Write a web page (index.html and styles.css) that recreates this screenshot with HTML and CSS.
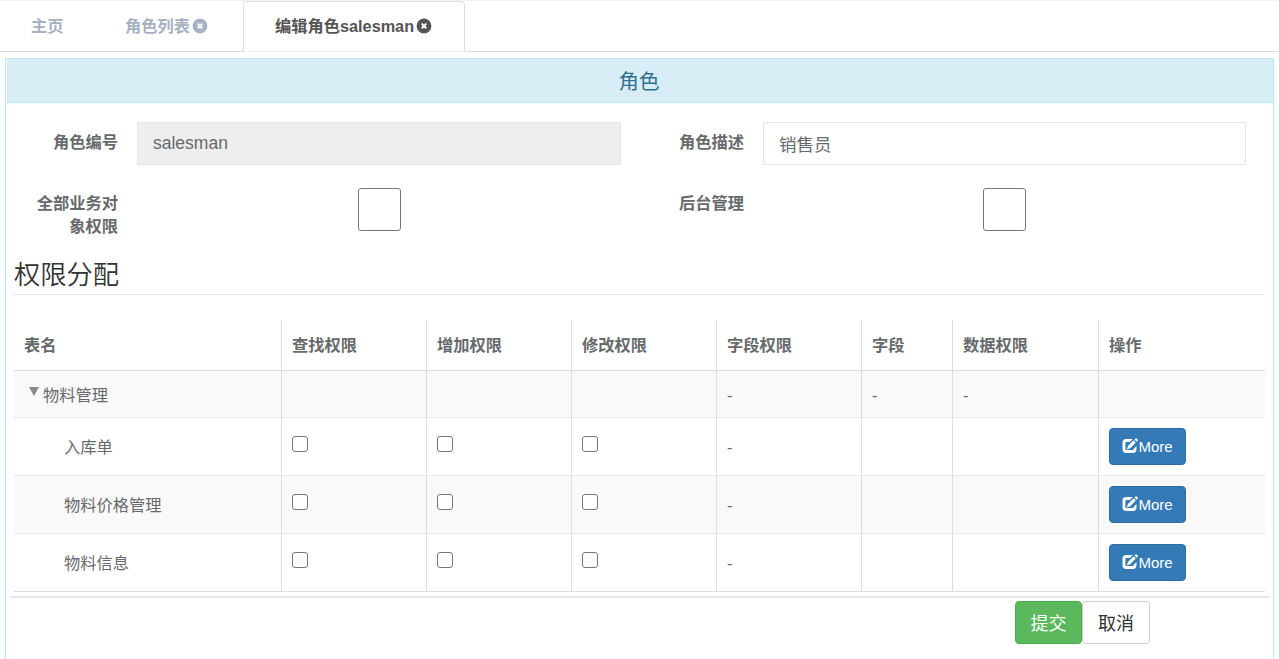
FILE: index.html
```html
<!DOCTYPE html>
<html lang="zh-CN">
<head>
    <meta charset="UTF-8">
    <meta name="viewport" content="width=device-width, initial-scale=1.0">
    <title>编辑角色</title>
    <link rel="stylesheet" href="styles.css">
</head>
<body>
    <svg class="icon-defs">
        <symbol id="icon-close" viewBox="0 0 16 16">
            <path fill-rule="evenodd" d="M8 .6a7.400 7.400 0 1 0 0 14.800A7.400 7.400 0 0 0 8 .6zM5 6.300l1.300-1.300L8 6.600l1.700-1.600 1.300 1.300L9.400 8l1.600 1.700-1.300 1.300L8 9.400l-1.700 1.600-1.300-1.300L6.600 8z"/>
        </symbol>
        <symbol id="icon-edit" viewBox="0 0 16 16">
            <path d="M10.600 1H4.200A3.700 3.700 0 0 0 .5 4.700v6.600A3.700 3.700 0 0 0 4.200 15h6.600a3.700 3.700 0 0 0 3.700-3.700V8l-2.800 2.700v.3a1.100 1.100 0 0 1-1.100 1.100H4.500a1.100 1.100 0 0 1-1.100-1.100v-6a1.100 1.100 0 0 1 1.100-1.100h3.400z"/>
            <path d="M11.600 2.300l2.200 2.200-5.600 5.700-3.500 1.200 1.300-3.500zM12.500 1.500l1-1a.8.8 0 0 1 1.100 0l1.100 1.100a.8.8 0 0 1 0 1.100l-1 1z"/>
        </symbol>
    </svg>

    <ul class="tabs">
        <li class="tab tab-home"><a>主页</a></li>
        <li class="tab tab-list"><a>角色列表</a><svg class="icon-close"><use href="#icon-close"/></svg></li>
        <li class="tab tab-edit active"><a>编辑角色salesman</a><svg class="icon-close"><use href="#icon-close"/></svg></li>
    </ul>

    <div class="panel">
        <div class="panel-heading">角色</div>
        <div class="panel-body">
            <form class="role-form">
                <label>角色编号</label>
                <input type="text" class="form-control" value="salesman" disabled>
                <label>角色描述</label>
                <input type="text" class="form-control" value="销售员">
                <label>全部业务对象权限</label>
                <div class="check-field"><input type="checkbox" class="check check-lg"></div>
                <label>后台管理</label>
                <div class="check-field"><input type="checkbox" class="check check-lg"></div>
            </form>

            <h3 class="legend">权限分配</h3>

            <table class="table">
                <colgroup>
                    <col class="col-name">
                    <col class="col-auth">
                    <col class="col-auth">
                    <col class="col-auth">
                    <col class="col-auth">
                    <col class="col-field">
                    <col class="col-data">
                    <col class="col-action">
                </colgroup>
                <thead>
                    <tr>
                        <th>表名</th>
                        <th>查找权限</th>
                        <th>增加权限</th>
                        <th>修改权限</th>
                        <th>字段权限</th>
                        <th>字段</th>
                        <th>数据权限</th>
                        <th>操作</th>
                    </tr>
                </thead>
                <tbody>
                    <tr class="parent">
                        <td><span class="expander"></span>物料管理</td>
                        <td></td>
                        <td></td>
                        <td></td>
                        <td>-</td>
                        <td>-</td>
                        <td>-</td>
                        <td></td>
                    </tr>
                    <tr>
                        <td class="child">入库单</td>
                        <td><input type="checkbox" class="check"></td>
                        <td><input type="checkbox" class="check"></td>
                        <td><input type="checkbox" class="check"></td>
                        <td>-</td>
                        <td></td>
                        <td></td>
                        <td><button class="btn btn-primary"><svg class="icon-edit"><use href="#icon-edit"/></svg>More</button></td>
                    </tr>
                    <tr>
                        <td class="child">物料价格管理</td>
                        <td><input type="checkbox" class="check"></td>
                        <td><input type="checkbox" class="check"></td>
                        <td><input type="checkbox" class="check"></td>
                        <td>-</td>
                        <td></td>
                        <td></td>
                        <td><button class="btn btn-primary"><svg class="icon-edit"><use href="#icon-edit"/></svg>More</button></td>
                    </tr>
                    <tr>
                        <td class="child">物料信息</td>
                        <td><input type="checkbox" class="check"></td>
                        <td><input type="checkbox" class="check"></td>
                        <td><input type="checkbox" class="check"></td>
                        <td>-</td>
                        <td></td>
                        <td></td>
                        <td><button class="btn btn-primary"><svg class="icon-edit"><use href="#icon-edit"/></svg>More</button></td>
                    </tr>
                </tbody>
            </table>
        </div>
        <div class="panel-footer">
            <button class="btn btn-success">提交</button>
            <button class="btn btn-default">取消</button>
        </div>
    </div>
</body>
</html>
```
FILE: styles.css
```css
* {
    margin: 0;
    padding: 0;
    box-sizing: border-box;
}

body {
    height: 659px;
    overflow: hidden;
    display: flex;
    flex-direction: column;
    font-family: "Liberation Sans", "Noto Sans CJK SC", sans-serif;
    font-size: 16.25px;
    line-height: 23px;
    color: #676a6c;
    background-color: #fff;
}

.icon-defs {
    display: none;
}

/* Tabs */
.tabs {
    display: flex;
    flex: none;
    height: 52px;
    list-style: none;
    border-top: 1px solid #f3f3f4;
    border-bottom: 1px solid #ddd;
}

.tab {
    display: flex;
    align-items: center;
    height: 50px;
    padding-left: 31px;
    font-weight: bold;
    color: #a7b1c2;
    white-space: nowrap;
}

.tab-home {
    width: 94px;
}

.tab-list {
    width: 149px;
}

.tab-edit {
    width: 222px;
}

.tab.active {
    height: 51px;
    padding-bottom: 1px;
    color: #555;
    background-color: #fff;
    border: 1px solid #ddd;
    border-bottom-color: #f3f3f4;
    border-radius: 5px 5px 0 0;
}

.icon-close {
    width: 16px;
    height: 16px;
    margin-left: 2px;
    fill: currentColor;
}

/* Panel */
.panel {
    flex: 1;
    margin: 6px 5px 0;
    border: 1px solid #bce8f1;
    border-bottom: 0;
    border-radius: 2px 2px 0 0;
}

.panel-heading {
    height: 44px;
    margin-left: 1px;
    padding-right: 2px;
    line-height: 45px;
    font-size: 20.5px;
    text-align: center;
    color: #31708f;
    background-color: #d9edf7;
    border-bottom: 1px solid #bce8f1;
}

.panel-body {
    padding: 19px 8px 0;
}

.role-form {
    display: grid;
    grid-template-columns: 123px 484px 142px 483px;
    grid-template-rows: 43px 48px;
    row-gap: 23px;
    margin-bottom: 20px;
}

.role-form label {
    width: 86px;
    padding-top: 9px;
    margin-left: auto;
    margin-right: 19px;
    font-weight: bold;
    text-align: right;
}

.role-form label:nth-of-type(n+3) {
    padding-top: 4px;
}

.form-control {
    width: 100%;
    height: 43px;
    padding: 0 15px 1px;
    font-family: inherit;
    font-size: 17.5px;
    color: #676a6c;
    background-color: #fff;
    border: 1px solid #e5e6e7;
    border-radius: 1px;
}

.form-control:disabled {
    background-color: #eee;
}

.check {
    display: block;
    appearance: none;
    width: 16px;
    height: 16px;
    background-color: #fff;
    border: 1px solid #767676;
    border-radius: 3px;
}

.check-lg {
    width: 43px;
    height: 43px;
    margin: 0 auto;
}

.legend {
    height: 39px;
    margin-bottom: 25px;
    line-height: 38px;
    font-size: 26.25px;
    font-weight: 350;
    color: #333;
    border-bottom: 1px solid #e5e5e5;
}

/* Permission table */
.table {
    width: 1251px;
    table-layout: fixed;
    border-collapse: separate;
    border-spacing: 0;
    border-bottom: 1px solid #ddd;
}

.col-name {
    width: 267px;
}

.col-auth {
    width: 145px;
}

.col-field {
    width: 91px;
}

.col-data {
    width: 146px;
}

.col-action {
    width: 167px;
}

.table th {
    height: 50px;
    padding: 0 10px;
    text-align: left;
    vertical-align: middle;
}

.table td {
    height: 58px;
    padding: 10px 10px 0;
    vertical-align: top;
    line-height: 39px;
    border-top: 1px solid #e7eaec;
}

.table th + th,
.table td + td {
    border-left: 1px solid #ddd;
}

.table .parent td {
    height: 47px;
    line-height: 28px;
    border-top-color: #ddd;
}

.table tbody tr:nth-child(odd) {
    background-color: #f9f9f9;
}

.table .child {
    padding-left: 50px;
}

.table td .check {
    margin-top: 8px;
}

.expander {
    display: inline-block;
    margin: 0 4px 5px 5px;
    border-top: 9px solid #888;
    border-left: 5.5px solid transparent;
    border-right: 5.5px solid transparent;
}

/* Buttons */
.btn {
    display: flex;
    align-items: center;
    justify-content: center;
    font-family: inherit;
    border: 1px solid transparent;
    border-radius: 4px;
}

.btn-primary {
    width: 77px;
    height: 37px;
    font-size: 15px;
    color: #fff;
    background-color: #337ab7;
    border-color: #2e6da4;
}

.icon-edit {
    width: 16px;
    height: 16px;
    margin-top: -1px;
    fill: currentColor;
}

.panel-footer {
    display: flex;
    justify-content: flex-end;
    margin: 4px 4px 0;
    padding: 3px 119px 0 0;
    border-top: 2px solid #e5e5e5;
}

.panel-footer .btn {
    width: 68px;
    height: 43px;
    padding-bottom: 2px;
    font-size: 18px;
}

.panel-footer .btn-success {
    width: 67px;
    color: #fff;
    background-color: #5cb85c;
    border-color: #4cae4c;
}

.btn-default {
    color: #333;
    background-color: #fff;
    border-color: #ccc;
}
```
